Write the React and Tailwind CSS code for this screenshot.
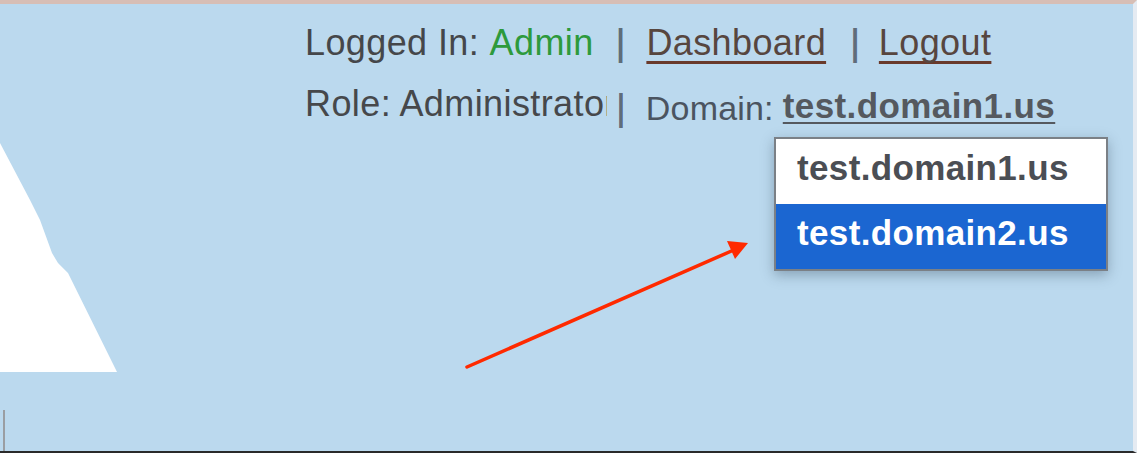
import React from "react";

const Pipe = ({ className = "" }) => (
  <span className={`text-[#5f6d7a] [text-shadow:0.6px_0_0_#5f6d7a] ${className}`}>|</span>
);

const domains = ["test.domain1.us", "test.domain2.us"];

const App = () => {
  const current = domains[0];

  return (
    <div className="relative flex h-[453px] w-full overflow-hidden border-t-4 border-b-2 border-r-4 border-t-[#d7beb5] border-b-[#2a2a2a] border-r-[#e5ebf2] bg-[#bbd9ee] font-['Liberation_Sans',Arial,sans-serif]">
      {/* logo fragment */}
      <div className="flex w-[305px] shrink-0 flex-col">
        <svg className="mt-[139px]" width="120" height="229" viewBox="0 143 120 229">
          <polygon
            fill="#ffffff"
            points="0,143 30,200 40,220 52,253 58,263 68,273 117,372 0,372"
          />
        </svg>
        <div className="mt-auto ml-[3px] h-[41px] w-[2px] bg-[#9a9ea3]" />
      </div>

      {/* header links */}
      <div className="flex flex-col pt-[19px] text-[36px] tracking-[0.4px]">
        <div className="flex h-[40px] items-baseline whitespace-nowrap leading-[40px]">
          <span className="text-[#45474a]">Logged In:&nbsp;</span>
          <span className="text-[#2d9a3c]">Admin</span>
          <Pipe className="ml-[22px] mr-[21px]" />
          <a href="#" className="text-[#57463f] underline decoration-[#6a3a2b] decoration-[3px] underline-offset-[6px] [text-decoration-skip-ink:none]">
            Dashboard
          </a>
          <Pipe className="ml-[24px] mr-[19px]" />
          <a href="#" className="text-[#57463f] underline decoration-[#6a3a2b] decoration-[3px] underline-offset-[6px] [text-decoration-skip-ink:none]">
            Logout
          </a>
        </div>

        <div className="mt-[21px] flex h-[40px] items-baseline whitespace-nowrap leading-[40px]">
          <span className="w-[302px] overflow-hidden text-[#46484b]">Role: Administrator</span>
          <Pipe className="ml-[9px] mr-[20px] translate-y-[4px]" />
          <span className="translate-y-[4px] text-[34px] tracking-[0.2px] text-[#4b5460]">Domain:</span>
          <a
            href="#"
            className="ml-[9px] translate-y-[2px] text-[35px] font-bold tracking-[0.4px] text-[#55595f] underline decoration-2 underline-offset-[4px]"
          >
            {current}
          </a>
        </div>
      </div>

      {/* open domain menu */}
      <ul className="absolute left-[774px] top-[133px] w-[334px] border-2 border-[#7b8086] bg-white shadow-[0_4px_12px_rgba(40,60,80,0.35)]">
        {domains.map((d) => (
          <li
            key={d}
            className={`flex h-[65px] items-center pb-[6px] pl-[21px] text-[35px] font-bold tracking-[0.35px] ${
              d === current ? "bg-white text-[#4b4e54]" : "bg-[#1b66d1] text-white"
            }`}
          >
            {d}
          </li>
        ))}
      </ul>

      {/* annotation arrow */}
      <svg className="pointer-events-none absolute left-0 top-0" width="1137" height="449" viewBox="0 4 1137 449">
        <line x1="467" y1="367" x2="736" y2="249" stroke="#ff2a00" strokeWidth="3.5" strokeLinecap="round" />
        <polygon points="748,243 727,241 735,259" fill="#ff2a00" />
      </svg>
    </div>
  );
};

export default App;
